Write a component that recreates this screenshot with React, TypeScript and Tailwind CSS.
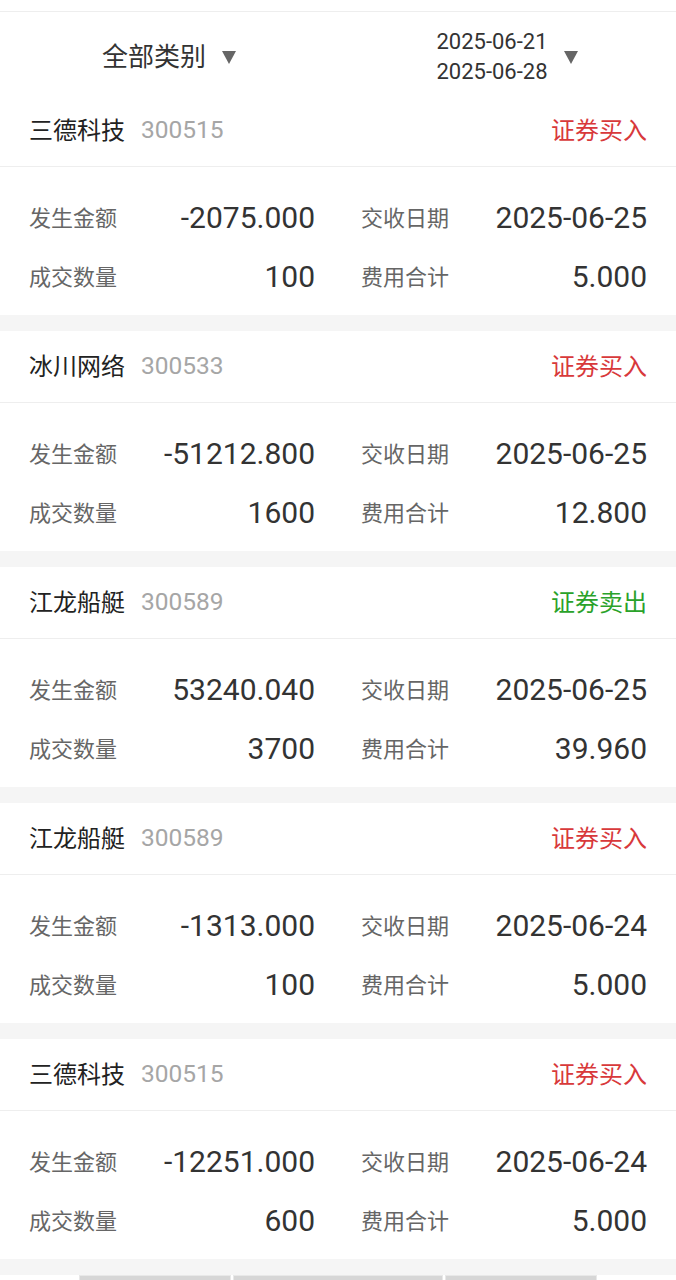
import React from "react";

type Trade = {
  name: string;
  code: string;
  side: "buy" | "sell";
  amount: string;
  date: string;
  qty: string;
  fee: string;
};

const trades: Trade[] = [
  { name: "三德科技", code: "300515", side: "buy", amount: "-2075.000", date: "2025-06-25", qty: "100", fee: "5.000" },
  { name: "冰川网络", code: "300533", side: "buy", amount: "-51212.800", date: "2025-06-25", qty: "1600", fee: "12.800" },
  { name: "江龙船艇", code: "300589", side: "sell", amount: "53240.040", date: "2025-06-25", qty: "3700", fee: "39.960" },
  { name: "江龙船艇", code: "300589", side: "buy", amount: "-1313.000", date: "2025-06-24", qty: "100", fee: "5.000" },
  { name: "三德科技", code: "300515", side: "buy", amount: "-12251.000", date: "2025-06-24", qty: "600", fee: "5.000" },
];

const font = "font-['Roboto','Noto_Sans_CJK_SC',sans-serif]";

function Caret() {
  return (
    <svg width="14" height="13" viewBox="0 0 14 13" className="shrink-0">
      <path d="M0 0 H14 L7 13 Z" fill="#666" />
    </svg>
  );
}

function Field({ label, value }: { label: string; value: string }) {
  return (
    <div className="flex h-10 items-center justify-between">
      <span className="text-[22px] text-[#666]">{label}</span>
      <span className="text-[30px] leading-none text-[#333]">{value}</span>
    </div>
  );
}

function TradeCard({ t }: { t: Trade }) {
  return (
    <div className="bg-white">
      <div className="flex h-[72px] items-center justify-between border-b border-[#eeeeee] px-[29px]">
        <div className="flex items-center gap-4">
          <span className="text-[24px] text-[#222]">{t.name}</span>
          <span className="text-[24.5px] text-[#a6a6a6]">{t.code}</span>
        </div>
        <span className={t.side === "buy" ? "text-[24px] text-[#d8393b]" : "text-[24px] text-[#2aa22a]"}>
          {t.side === "buy" ? "证券买入" : "证券卖出"}
        </span>
      </div>
      <div className="grid grid-cols-2 gap-x-[46px] gap-y-[19px] px-[29px] pb-[18px] pt-[31px]">
        <Field label="发生金额" value={t.amount} />
        <Field label="交收日期" value={t.date} />
        <Field label="成交数量" value={t.qty} />
        <Field label="费用合计" value={t.fee} />
      </div>
    </div>
  );
}

export default function App() {
  return (
    <div className={`${font} min-h-[1280px] w-[676px] overflow-hidden bg-[#f5f5f5]`}>
      <div className="h-3 border-b border-[#eeeeee] bg-white" />
      <div className="flex h-[83px] bg-white pt-[7px]">
        <div className="flex flex-1 items-center justify-center gap-4">
          <span className="text-[26px] text-[#333]">全部类别</span>
          <Caret />
        </div>
        <div className="flex flex-1 items-center justify-center gap-4">
          <div className="flex flex-col text-[22px] leading-[30px] text-[#333]">
            <span>2025-06-21</span>
            <span>2025-06-28</span>
          </div>
          <Caret />
        </div>
      </div>
      <div className="flex flex-col gap-4">
        {trades.map((t, i) => (
          <TradeCard key={i} t={t} />
        ))}
      </div>
      <div className="mt-4 flex h-10 items-start bg-white pl-[79px]">
        <div className="h-10 w-[152px] border border-[#e8e8e8] bg-[#d6d6d6]" />
        <div className="ml-[2px] h-10 w-[210px] border border-[#e8e8e8] bg-[#d6d6d6]" />
        <div className="ml-[2px] h-10 w-[152px] border border-[#e8e8e8] bg-[#d6d6d6]" />
      </div>
    </div>
  );
}
